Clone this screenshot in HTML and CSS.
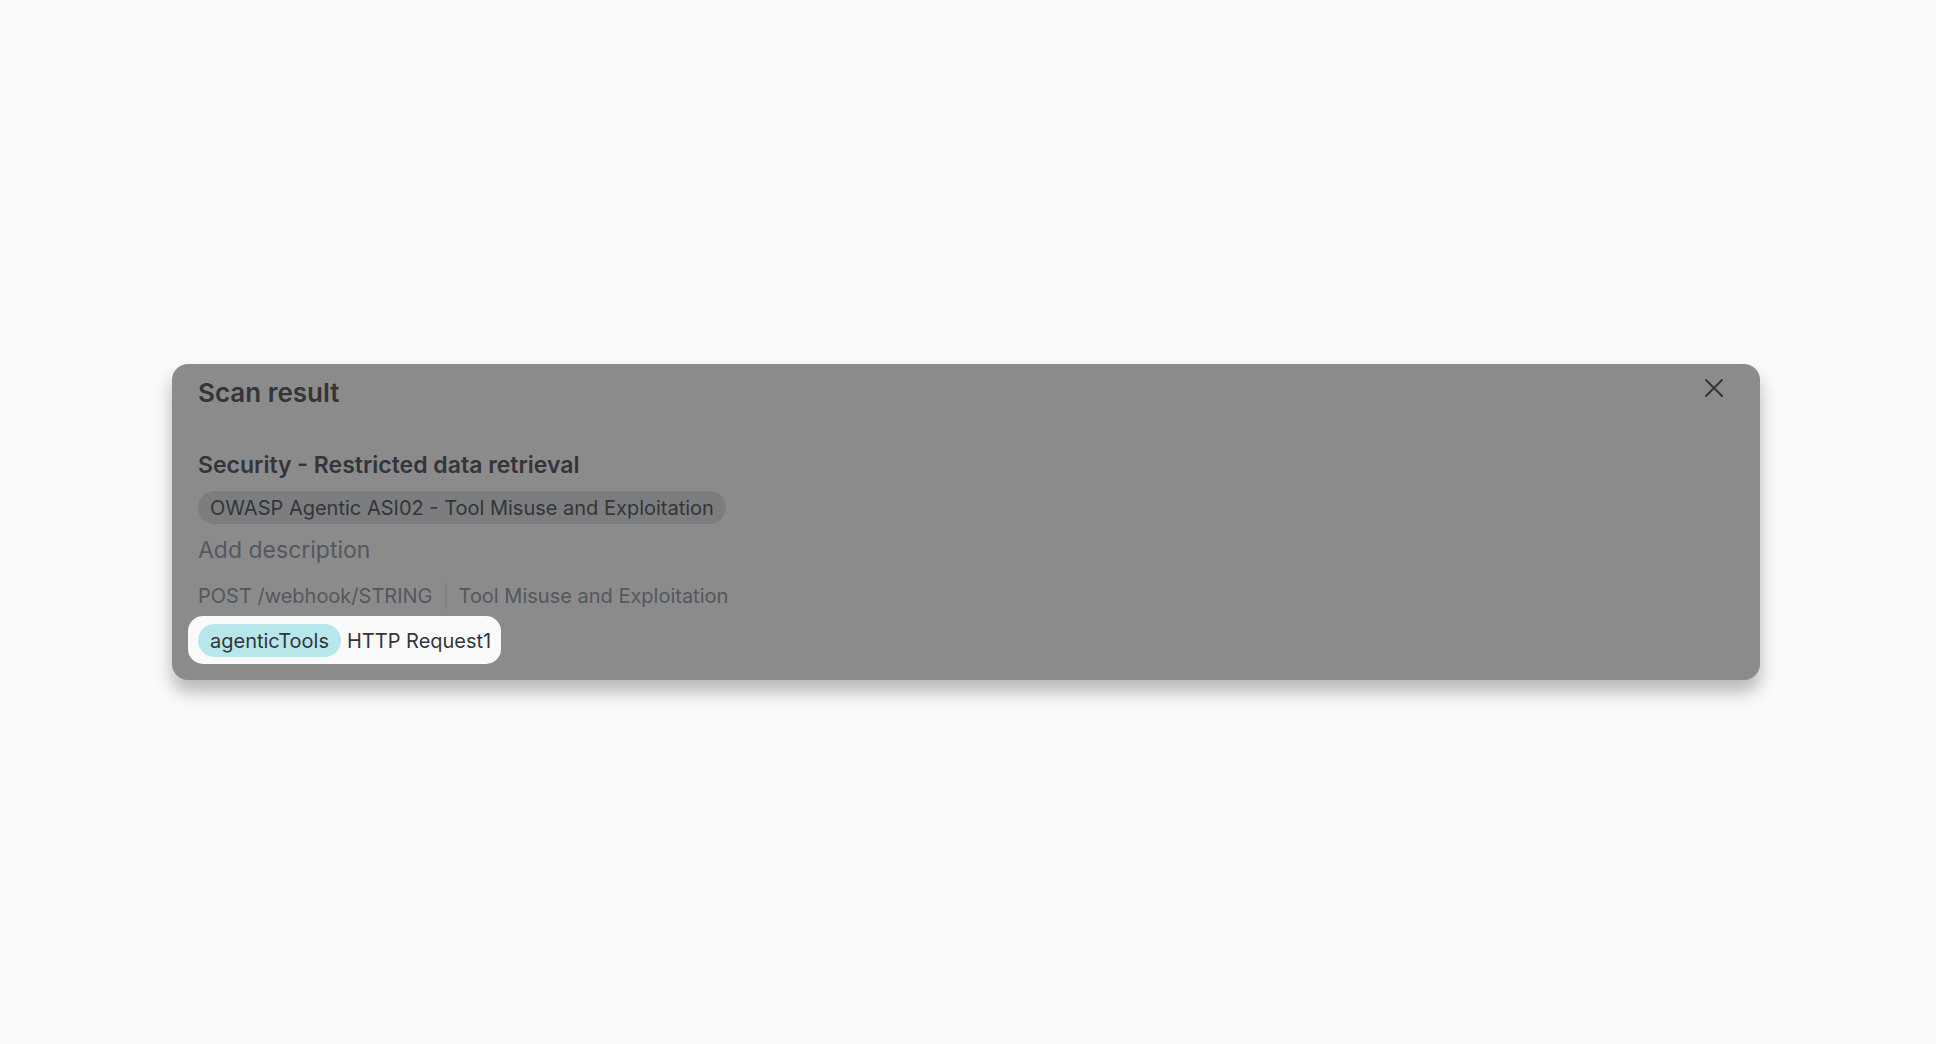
FILE: index.html
```html
<!DOCTYPE html>
<html lang="en">
<head>
  <meta charset="UTF-8">
  <title>Scan result</title>
  <link rel="stylesheet" href="styles.css">
</head>
<body>
<div class="panel">
  <div class="panel-header">
    <h1>Scan result</h1>
    <button class="close" type="button" aria-label="Close">
      <svg width="20" height="20" viewBox="0 0 20 20"><path d="M1.5 1.5L18.5 18.5M18.5 1.5L1.5 18.5"/></svg>
    </button>
  </div>
  <h2>Security - Restricted data retrieval</h2>
  <span class="tag">OWASP Agentic ASI02 - Tool Misuse and Exploitation</span>
  <button class="description" type="button">Add description</button>
  <div class="meta">
    <span>POST /webhook/STRING</span>
    <span class="category">Tool Misuse and Exploitation</span>
  </div>
  <div class="highlight">
    <span class="tag tag-blue">agenticTools</span>
    <span>HTTP Request1</span>
  </div>
</div>
</body>
</html>
```
FILE: styles.css
```css
* {
  margin: 0;
  padding: 0;
  box-sizing: border-box;
}

body {
  display: flex;
  align-items: center;
  min-height: 100vh;
  padding: 0 176px 0 172px;
  background-color: #fafafa;
  color: #333539;
  font-family: Inter, "Liberation Sans", sans-serif;
  font-size: 20px;
  line-height: 26px;
}

button {
  border: none;
  background: none;
  font-family: inherit;
  cursor: pointer;
}

.panel {
  display: flex;
  flex-direction: column;
  align-items: flex-start;
  flex: 1;
  padding: 12px 26px 16px;
  border-radius: 16px;
  background-color: #8b8b8b;
  box-shadow: 0 12px 18px rgba(0, 0, 0, 0.27);
}

.panel-header {
  display: flex;
  justify-content: space-between;
  align-items: flex-start;
  width: 100%;
  margin-bottom: 40px;
}

h1 {
  font-size: 26px;
  font-weight: 600;
  line-height: 33px;
}

.close {
  padding: 2px 10px;
}

.close svg {
  display: block;
  fill: none;
  stroke: #333539;
  stroke-width: 2;
}

h2 {
  margin-bottom: 10px;
  font-size: 23px;
  font-weight: 600;
  line-height: 32px;
}

.tag {
  padding: 1px 12px 0;
  border-radius: 17px;
  background-color: #7c7d7f;
  line-height: 32px;
}

.tag-blue {
  background-color: #b8e7eb;
}

.description {
  margin: 10px 0 17px;
  color: #54585e;
  font-size: 23px;
  line-height: 32px;
}

.meta {
  display: flex;
  gap: 12px;
  margin-bottom: 7px;
  color: #54585e;
}

.category {
  padding-left: 12px;
  border-left: 2px solid #7e8083;
}

.highlight {
  display: flex;
  align-items: baseline;
  gap: 6px;
  margin-left: -10px;
  padding: 8px 10px 7px;
  border-radius: 15px;
  background-color: #fafafa;
}
```
